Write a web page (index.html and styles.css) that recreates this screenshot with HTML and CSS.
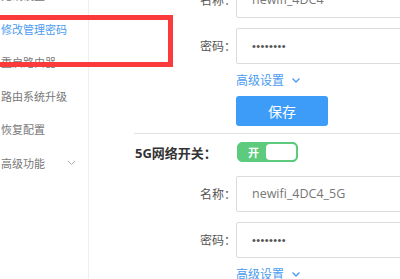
FILE: index.html
```html
<!DOCTYPE html>
<html lang="zh-CN">
<head>
  <meta charset="UTF-8">
  <meta name="viewport" content="width=device-width, initial-scale=1.0">
  <title>路由设置</title>
  <link rel="stylesheet" href="styles.css">
</head>
<body>

<div class="page">
  <div class="sidebar">
    <div class="menu-item">无线设置</div>
    <div class="menu-item active">修改管理密码</div>
    <div class="menu-item">重启路由器</div>
    <div class="menu-item">路由系统升级</div>
    <div class="menu-item">恢复配置</div>
    <div class="menu-item has-sub">
      <span>高级功能</span>
      <svg class="chev" width="9" height="6" viewBox="0 0 9 6"><path d="M1 1l3.5 3.5L8 1" fill="none" stroke="#aaa" stroke-width="1"/></svg>
    </div>
  </div>

  <div class="main">
    <div class="section first">
      <div class="row">
        <label class="label">名称：</label>
        <div class="input">newifi_4DC4</div>
      </div>
      <div class="row">
        <label class="label">密码：</label>
        <div class="input pwd">••••••••</div>
      </div>
      <div class="row link-row">
        <span class="label"></span>
        <a class="more" href="#">高级设置
          <svg width="10" height="7" viewBox="0 0 10 7"><path d="M1.5 1.5l3.5 3.5 3.5-3.5" fill="none" stroke="#4a9bf0" stroke-width="1.3"/></svg>
        </a>
      </div>
      <div class="row btn-row">
        <span class="label"></span>
        <button class="save">保存</button>
      </div>
    </div>

    <div class="section">
      <div class="row switch-row">
        <span class="label title">5G网络开关：</span>
        <div class="switch">
          <span class="on">开</span>
          <span class="knob"></span>
        </div>
      </div>
      <div class="row">
        <label class="label">名称：</label>
        <div class="input">newifi_4DC4_5G</div>
      </div>
      <div class="row">
        <label class="label">密码：</label>
        <div class="input pwd">••••••••</div>
      </div>
      <div class="row link-row">
        <span class="label"></span>
        <a class="more" href="#">高级设置
          <svg width="10" height="7" viewBox="0 0 10 7"><path d="M1.5 1.5l3.5 3.5 3.5-3.5" fill="none" stroke="#4a9bf0" stroke-width="1.3"/></svg>
        </a>
      </div>
    </div>
  </div>

  <div class="highlight"></div>
</div>

</body>
</html>
```

FILE: styles.css
```css
body {
  margin: 0;
  padding: 0;
  background-color: #fff;
  font-family: "Open Sans", "Noto Sans CJK SC", sans-serif;
  overflow: hidden;
}

.page {
  position: relative;
  display: flex;
  width: 400px;
  height: 279px;
  overflow: hidden;
}

.sidebar {
  width: 88px;
  flex-shrink: 0;
  border-right: 1px solid #efefef;
  margin-top: -21px;
}

.menu-item {
  height: 33.5px;
  line-height: 33.5px;
  padding-left: 1px;
  font-size: 11px;
  color: #777;
  white-space: nowrap;
}

.menu-item.active {
  color: #4a9bf0;
}

.menu-item.has-sub {
  display: flex;
  align-items: center;
  justify-content: space-between;
  padding-right: 12px;
}

.main {
  flex: 1;
  padding-left: 45px;
}

.section {
  border-top: 1px solid #e2e2e2;
  padding-top: 8px;
}

.section.first {
  border-top: none;
  padding-top: 0;
  margin-top: -18px;
  padding-bottom: 7px;
}

.row {
  display: flex;
  align-items: center;
  margin-bottom: 9.5px;
}

.label {
  width: 102px;
  flex-shrink: 0;
  text-align: right;
  font-size: 12px;
  color: #555;
}

.label.title {
  text-align: left;
  padding-left: 1px;
  font-size: 13px;
  font-weight: bold;
  color: #333;
}

.input {
  width: 200px;
  height: 34px;
  line-height: 34px;
  border: 1px solid #dcdcdc;
  border-radius: 2px;
  padding-left: 15px;
  font-size: 12.5px;
  color: #777;
  white-space: nowrap;
}

.input.pwd {
  font-family: "Liberation Sans", sans-serif;
  font-size: 11px;
  letter-spacing: 0.4px;
  color: #555;
}

.link-row {
  height: 24px;
  margin-top: -5px;
  margin-bottom: 4px;
}

.more {
  font-size: 12px;
  color: #4a9bf0;
  text-decoration: none;
  display: flex;
  align-items: center;
  gap: 7px;
}

.btn-row {
  margin-bottom: 0;
}

.save {
  width: 92px;
  height: 30px;
  border: none;
  border-radius: 3px;
  background-color: #3d9cf7;
  color: #fff;
  font-family: "Noto Sans CJK SC", sans-serif;
  font-size: 14px;
  padding: 0;
}

.switch-row {
  margin-bottom: 14px;
}

.switch {
  width: 61px;
  height: 20px;
  box-sizing: border-box;
  border: 1px solid #5ccb7e;
  border-radius: 5px;
  background-color: #5ccb7e;
  display: flex;
  align-items: center;
  justify-content: space-between;
  padding: 1px;
}

.switch .on {
  color: #fff;
  font-size: 11px;
  font-weight: bold;
  padding-left: 9px;
}

.switch .knob {
  width: 30px;
  height: 16px;
  background-color: #fff;
  border-radius: 4px;
}

.highlight {
  position: absolute;
  left: -6px;
  top: 15px;
  width: 169px;
  height: 42px;
  border: 5px solid #fb3b3b;
}
```
